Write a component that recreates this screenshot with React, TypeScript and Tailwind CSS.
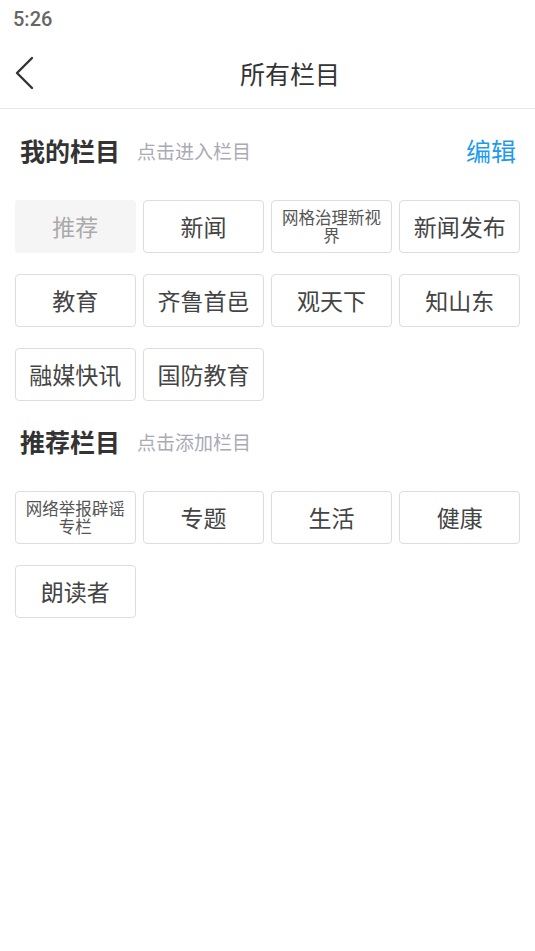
import React from "react";

const FONT = { fontFamily: '"Noto Sans CJK SC", "Noto Sans", sans-serif' };

interface Channel {
  name: string;
  fixed?: boolean;
}

const mine: Channel[] = [
  { name: "推荐", fixed: true },
  { name: "新闻" },
  { name: "网格治理新视界" },
  { name: "新闻发布" },
  { name: "教育" },
  { name: "齐鲁首邑" },
  { name: "观天下" },
  { name: "知山东" },
  { name: "融媒快讯" },
  { name: "国防教育" },
];

const recommended: Channel[] = [
  { name: "网络举报辟谣专栏" },
  { name: "专题" },
  { name: "生活" },
  { name: "健康" },
  { name: "朗读者" },
];

const Tile: React.FC<{ item: Channel }> = ({ item }) => {
  const long = item.name.length > 4;
  return (
    <div
      className={`h-[52.5px] rounded-[4px] flex items-center justify-center text-center ${
        item.fixed
          ? "bg-[#f5f5f5] text-[#aaaaaa]"
          : "bg-white border border-[#dddddd] text-[#444444]"
      }`}
    >
      <span
        className={
          long
            ? "px-[6px] text-[16.5px] leading-[18px] text-[#555555]"
            : "text-[23px] leading-none"
        }
      >
        {item.name}
      </span>
    </div>
  );
};

const SectionHeader: React.FC<{ title: string; hint: string; action?: string }> = ({
  title,
  hint,
  action,
}) => (
  <div className="h-[50px] flex items-center pl-[20px] pr-[19px]">
    <span className="text-[25px] font-bold text-[#333333] leading-none">{title}</span>
    <span className="ml-[17px] text-[19px] text-[#aaaab4] leading-none">{hint}</span>
    {action && (
      <span className="ml-auto text-[25px] text-[#1e9bf0] leading-none">{action}</span>
    )}
  </div>
);

export default function App() {
  return (
    <div className="w-[535px] h-[951px] bg-white overflow-hidden" style={FONT}>
      {/* status bar */}
      <div className="h-[38px] flex items-center pl-[13px]">
        <span className="text-[20px] font-medium text-[#666666]" style={{ fontFamily: "Roboto, sans-serif" }}>
          5:26
        </span>
      </div>

      {/* nav bar */}
      <div className="relative h-[71px] flex items-center justify-center border-b border-[#e8e8e8]">
        <svg
          className="absolute left-[12px] top-[17px]"
          width="24"
          height="36"
          viewBox="0 0 24 36"
          fill="none"
        >
          <path d="M20 3 L5 18 L20 33" stroke="#333333" strokeWidth="2.4" strokeLinecap="round" strokeLinejoin="round" />
        </svg>
        <span className="ml-[45px] text-[25px] text-[#333333] leading-none">所有栏目</span>
      </div>

      <div className="mt-[16px]">
        <SectionHeader title="我的栏目" hint="点击进入栏目" action="编辑" />
      </div>
      <div className="mt-[25px] px-[15px] grid grid-cols-4 gap-x-[7.5px] gap-y-[21.5px]">
        {mine.map((c) => (
          <Tile key={c.name} item={c} />
        ))}
      </div>

      <div className="mt-[15.5px]">
        <SectionHeader title="推荐栏目" hint="点击添加栏目" />
      </div>
      <div className="mt-[25px] px-[15px] grid grid-cols-4 gap-x-[7.5px] gap-y-[21.5px]">
        {recommended.map((c) => (
          <Tile key={c.name} item={c} />
        ))}
      </div>
    </div>
  );
}
